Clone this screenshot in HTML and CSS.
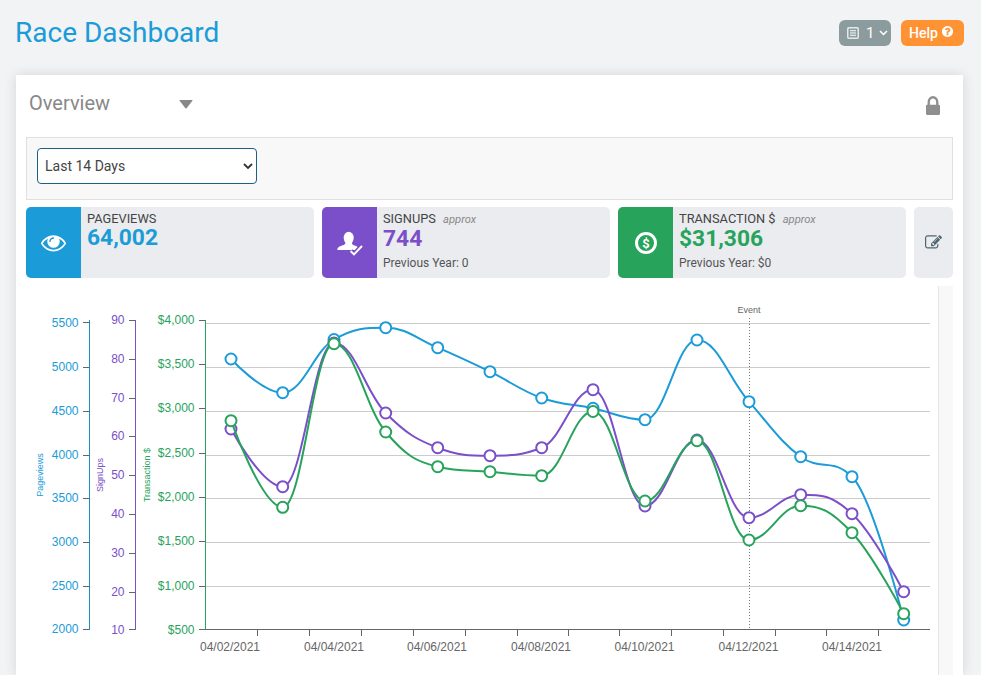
FILE: index.html
```html
<!DOCTYPE html>
<html lang="en">
<head>
<meta charset="utf-8">
<title>Race Dashboard</title>
<link rel="stylesheet" href="styles.css">
</head>
<body>
<header class="top">
  <h1 class="title">Race Dashboard</h1>
  <div class="top-actions">
    <button class="btn btn-gray" type="button">
      <svg class="doc-icon" viewBox="0 0 12 12"><rect x="0.75" y="0.75" width="10.5" height="10.5" rx="1" fill="none" stroke="currentColor" stroke-width="1.5"/><path d="M3 3.5h6M3 5.2h6M3 6.9h6M3 8.6h6" stroke="currentColor" stroke-width="1"/></svg>
      <span class="btn-num">1</span>
      <svg class="chev-icon" viewBox="0 0 9 6"><path d="M1 1l3.5 3.5L8 1" fill="none" stroke="currentColor" stroke-width="1.5"/></svg>
    </button>
    <button class="btn btn-orange" type="button">
      <span>Help</span>
      <svg class="help-icon" viewBox="0 0 1792 1792"><path fill="currentColor" d="M1024 1376v-192q0-14-9-23t-23-9h-192q-14 0-23 9t-9 23v192q0 14 9 23t23 9h192q14 0 23-9t9-23zm256-672q0-88-55.5-163t-138.5-116-170-41q-243 0-371 213-15 24 8 42l132 100q7 6 19 6 16 0 25-12 53-68 86-92 34-24 86-24 48 0 85.5 26t37.5 59q0 38-20 61t-68 45q-63 28-115.5 86.5t-52.5 125.5v36q0 14 9 23t23 9h192q14 0 23-9t9-23q0-19 21.5-49.5t54.5-49.5q32-18 49-28.5t46-35 44.5-48 28-60.5 12.5-81zm384 192q0 209-103 385.5t-279.5 279.5-385.5 103-385.5-103-279.5-279.5-103-385.5 103-385.5 279.5-279.5 385.5-103 385.5 103 279.5 279.5 103 385.5z"/></svg>
    </button>
  </div>
</header>

<main class="card">
  <div class="card-head">
    <div class="view-name">
      <span>Overview</span>
      <svg class="caret" viewBox="0 0 14 9"><path d="M1 0h12q1 0 .4.8L7.6 8.2q-.6.8-1.2 0L.6.8Q0 0 1 0z" fill="currentColor"/></svg>
    </div>
    <svg class="lock" viewBox="320 128 1152 1408" preserveAspectRatio="none"><path fill="currentColor" d="M640 768h512v-192q0-106-75-181t-181-75-181 75-75 181v192zm832 96v576q0 40-28 68t-68 28h-960q-40 0-68-28t-28-68v-576q0-40 28-68t68-28h32v-192q0-184 132-316t316-132 316 132 132 316v192h32q40 0 68 28t28 68z"/></svg>
  </div>

  <div class="filter-box">
    <div class="select-wrap">
      <select class="range-select">
        <option>Last 14 Days</option>
      </select>
      <svg class="select-chev" viewBox="0 0 10 7"><path d="M1 1l4 4 4-4" fill="none" stroke="currentColor" stroke-width="1.8"/></svg>
    </div>
  </div>

  <section class="stats">
    <article class="stat">
      <div class="stat-icon bg-blue">
        <svg class="eye" viewBox="0 0 1792 1792"><path fill="currentColor" d="M1664 960q-152-236-381-353 61 104 61 225 0 185-131.5 316.5t-316.5 131.5-316.5-131.5-131.5-316.5q0-121 61-225-229 117-381 353 133 205 333.5 326.5t434.5 121.5 434.5-121.5 333.5-326.5zm-720-384q0-20-14-34t-34-14q-125 0-214.5 89.5t-89.5 214.5q0 20 14 34t34 14 34-14 14-34q0-86 61-147t147-61q20 0 34-14t14-34zm848 384q0 34-20 69-140 230-376.5 368.5t-499.5 138.5-499.5-139-376.5-368q-20-35-20-69t20-69q140-229 376.5-368t499.5-139 499.5 139 376.5 368q20 35 20 69z"/></svg>
      </div>
      <div class="stat-body">
        <div class="stat-label">PAGEVIEWS</div>
        <div class="stat-value c-blue">64,002</div>
      </div>
    </article>
    <article class="stat">
      <div class="stat-icon bg-purple">
        <svg class="user-check" viewBox="0 0 28 28">
          <ellipse cx="12.7" cy="9" rx="5" ry="6.2" fill="#fff"/>
          <path d="M9.5 14c0 1.800-3 2.200-5.500 3.300-1.800.8-2.700 2-2.700 3.700h22c0-1.700-1-2.900-2.800-3.700-2.500-1.100-4.700-1.500-4.700-3.300z" fill="#fff"/>
          <path d="M14.500 22l3.500 3.500 8-8.500" fill="none" stroke="#7b4fc9" stroke-width="5"/>
          <path d="M14.500 22l3.500 3.500 8-8.500" fill="none" stroke="#fff" stroke-width="1.900"/>
        </svg>
      </div>
      <div class="stat-body">
        <div class="stat-label">SIGNUPS <em class="approx">approx</em></div>
        <div class="stat-value c-purple">744</div>
        <div class="stat-prev">Previous Year: 0</div>
      </div>
    </article>
    <article class="stat">
      <div class="stat-icon bg-green">
        <svg class="dollar" viewBox="0 0 22 22">
          <circle cx="11" cy="11" r="9.500" fill="none" stroke="#fff" stroke-width="3"/>
          <text class="dollar-text" x="11" y="15.500">$</text>
        </svg>
      </div>
      <div class="stat-body">
        <div class="stat-label">TRANSACTION $ <em class="approx">approx</em></div>
        <div class="stat-value c-green">$31,306</div>
        <div class="stat-prev">Previous Year: $0</div>
      </div>
    </article>
    <button class="edit-tile" type="button" aria-label="Edit">
      <svg class="edit-icon" viewBox="0 0 1792 1792"><path fill="currentColor" d="M888 1184l116-116-152-152-116 116v56h96v96h56zm440-720q-16-16-33 1l-350 350q-17 17-1 33t33-1l350-350q17-17 1-33zm80 594v190q0 119-84.500 203.500t-203.500 84.500h-832q-119 0-203.500-84.500t-84.500-203.500v-832q0-119 84.500-203.500t203.500-84.500h832q63 0 117 25 15 7 18 23 3 17-9 29l-49 49q-14 14-32 8-23-6-45-6h-832q-66 0-113 47t-47 113v832q0 66 47 113t113 47h832q66 0 113-47t47-113v-126q0-13 9-22l64-64q15-15 35-7t20 29zm-96-738l288 288-672 672h-288v-288zm444 132l-92 92-288-288 92-92q28-28 68-28t68 28l152 152q28 28 28 68t-28 68z"/></svg>
    </button>
  </section>

  <section class="chart-row">
    <svg id="chart" class="chart" viewBox="26 286 912 389"></svg>
    <div class="chart-side"></div>
  </section>
</main>
<script src="chart.js"></script>
</body>
</html>
```
FILE: styles.css
```css
* { box-sizing: border-box; }
html, body { height: 100%; }
body {
  margin: 0;
  height: 675px;
  overflow: hidden;
  background: #f1f3f5;
  font-family: Roboto, "Liberation Sans", sans-serif;
  color: #444;
}
.top {
  display: flex;
  justify-content: space-between;
  align-items: flex-start;
  padding: 20px 17px 0 15px;
  height: 75px;
}
.title {
  margin: -3px 0 0;
  font-size: 28px;
  line-height: 32px;
  font-weight: 400;
  color: #1b9bd7;
}
.top-actions { display: flex; gap: 10px; }
.btn {
  display: flex;
  align-items: center;
  height: 26px;
  padding: 0;
  border: 0;
  border-radius: 6px;
  color: #fff;
  font: 500 14px Roboto, sans-serif;
}
.btn-gray { width: 52px; background: #8c9c9e; padding-left: 8px; gap: 7px; }
.btn-gray .doc-icon { width: 12px; height: 12px; color: #e3e9e9; }
.btn-num { font-size: 15px; font-weight: 400; }
.chev-icon { width: 9px; height: 6px; margin-left: -2px; }
.btn-orange { width: 63px; background: #ff9233; padding-left: 8px; gap: 3px; }
.help-icon { width: 13px; height: 13px; margin-top: -3px; }

.card {
  margin: 0 18px 0 16px;
  height: 600px;
  padding: 0 10px;
  background: #fff;
  box-shadow: 0 0 12px rgba(0, 0, 0, .12);
}
.card-head {
  display: flex;
  justify-content: space-between;
  align-items: center;
  height: 62px;
  padding: 0 13px 7px 3px;
}
.view-name {
  display: flex;
  align-items: center;
  gap: 69px;
  font-size: 20px;
  color: #888;
}
.caret { width: 14px; height: 9px; color: #888; margin-top: 4px; }
.lock { width: 14px; height: 19px; color: #8f8f8f; margin-top: 5px; }

.filter-box {
  height: 63px;
  padding: 10px;
  background: #f8f8f8;
  border: 1px solid #e0e0e0;
}
.select-wrap { position: relative; width: 220px; }
.range-select {
  display: block;
  width: 100%;
  height: 36px;
  padding: 0 7px;
  appearance: none;
  background: #fff;
  border: 1px solid #1d5f82;
  border-radius: 4px;
  color: #444;
  font: 400 14px Roboto, sans-serif;
}
.select-chev {
  position: absolute;
  right: 4px;
  top: 15px;
  width: 10px;
  height: 7px;
  color: #333;
}

.stats {
  display: flex;
  gap: 8px;
  margin-top: 7px;
}
.stat {
  display: flex;
  flex: 0 0 288px;
  height: 71px;
  background: #eaecef;
  border-radius: 5px;
  overflow: hidden;
}
.stat-icon {
  flex: 0 0 55px;
  display: flex;
  align-items: center;
  justify-content: center;
  color: #fff;
}
.bg-blue { background: #1b9bd7; }
.bg-purple { background: #7b4fc9; }
.bg-green { background: #27a35c; }
.c-blue { color: #1b9bd7; }
.c-purple { color: #7b4fc9; }
.c-green { color: #27a35c; }
.eye { width: 25px; height: 25px; }
.user-check { width: 28px; height: 28px; }
.dollar { width: 22px; height: 22px; }
.dollar-text {
  fill: #fff;
  font: 700 13px Roboto, sans-serif;
  text-anchor: middle;
}
.stat-body { padding: 5px 6px; }
.stat-label { font-size: 12.800px; line-height: 14px; color: #444; white-space: nowrap; }
.approx { margin-left: 4px; font-size: 11.200px; color: #888; }
.stat-value { font-size: 22.800px; line-height: 24px; font-weight: 700; }
.stat-prev { margin-top: 5px; font-size: 12px; line-height: 14px; color: #555; }
.edit-tile {
  flex: 1;
  display: flex;
  align-items: center;
  justify-content: center;
  padding: 0;
  border: 0;
  border-radius: 5px;
  background: #eaecef;
  color: #4f6672;
}
.edit-icon { width: 17px; height: 17px; }

.chart-row { display: flex; margin-top: 8px; height: 389px; }
.chart { display: block; flex: 0 0 912px; width: 912px; height: 389px; }
.chart-side {
  flex: 1;
  background: #f8f8f8;
  border-left: 1px solid #e6e6e6;
}

.grid-line { stroke: #cccccc; stroke-width: 1; }
.axis-base { stroke: #666; stroke-width: 1; }
.tick { stroke: #666; stroke-width: 1; }
.axis-blue { stroke: #1b8fc9; stroke-width: 1; }
.axis-purple { stroke: #7b4fc9; stroke-width: 1; }
.axis-green { stroke: #27a35c; stroke-width: 1; }
.event-line { stroke: #777; stroke-width: 1; stroke-dasharray: 1 2; }
.label { font: 12px "Liberation Sans", Arial, sans-serif; }
.label-end { text-anchor: end; }
.label-mid { text-anchor: middle; }
.label-x { fill: #666; }
.fill-blue { fill: #1b9bd7; }
.fill-purple { fill: #7b4fc9; }
.fill-green { fill: #27a35c; }
.axis-title { font: 9px "Liberation Sans", Arial, sans-serif; text-anchor: middle; }
.event-label { font: 9px "Liberation Sans", Arial, sans-serif; text-anchor: middle; fill: #666; }
.series { fill: none; stroke-width: 2; }
.dot { fill: #fff; stroke-width: 2; }
.stroke-blue { stroke: #1b9bd7; }
.stroke-purple { stroke: #7b4fc9; }
.stroke-green { stroke: #27a35c; }
```
FILE: chart.js
```js
(function () {
  var svg = document.getElementById('chart');
  var NS = 'http://www.w3.org/2000/svg';

  function add(tag, attrs, text) {
    var el = document.createElementNS(NS, tag);
    for (var k in attrs) el.setAttribute(k, attrs[k]);
    if (text !== undefined) el.textContent = text;
    svg.appendChild(el);
    return el;
  }
  function line(x1, y1, x2, y2, cls) {
    add('line', { x1: x1, y1: y1, x2: x2, y2: y2, 'class': cls });
  }

  var gridY = [323.5, 367.5, 411.5, 455.5, 498.5, 542.5, 586.5];
  gridY.forEach(function (y) { line(206, y, 930, y, 'grid-line'); });

  var axes = [
    { x: 89.5, color: 'blue', ticks: [
      ['5500', 322.5, 327], ['5000', 367.5, 371], ['4500', 411.5, 415], ['4000', 455.5, 459],
      ['3500', 498.5, 502], ['3000', 542.5, 546], ['2500', 586.5, 590], ['2000', 629.5, 633]] },
    { x: 135.5, color: 'purple', ticks: [
      ['90', 320.5, 324], ['80', 359.5, 363], ['70', 398.5, 402], ['60', 436.5, 440],
      ['50', 475.5, 479], ['40', 514.5, 518], ['30', 553.5, 557], ['20', 592.5, 596], ['10', 629.5, 634]] },
    { x: 205.5, color: 'green', ticks: [
      ['$4,000', 320.5, 324], ['$3,500', 364.5, 368], ['$3,000', 408.5, 412], ['$2,500', 453.5, 457],
      ['$2,000', 497.5, 501], ['$1,500', 541.5, 545], ['$1,000', 586.5, 590], ['$500', 629.5, 634]] }
  ];
  axes.forEach(function (a) {
    line(a.x, 320, a.x, 630, 'axis-' + a.color);
    a.ticks.forEach(function (t) {
      line(a.x - 6.5, t[1], a.x, t[1], 'tick');
      add('text', { x: a.x - 11, y: t[2], 'class': 'label label-end fill-' + a.color }, t[0]);
    });
  });

  [['Pageviews', 42.5, 'blue'], ['SignUps', 102.5, 'purple'], ['Transaction $', 149.5, 'green']].forEach(function (t) {
    add('text', {
      x: t[1], y: 475, transform: 'rotate(-90 ' + t[1] + ' 475)',
      'class': 'axis-title fill-' + t[2]
    }, t[0]);
  });

  line(206, 629.5, 930, 629.5, 'axis-base');
  [257.5, 309.5, 361.5, 413.5, 465.5, 517.5, 568.5, 619.5, 671.5, 723.5, 775.5, 826.5, 878.5].forEach(function (x) {
    line(x, 630, x, 636, 'tick');
  });
  [['04/02/2021', 230], ['04/04/2021', 334], ['04/06/2021', 437], ['04/08/2021', 541],
   ['04/10/2021', 644.5], ['04/12/2021', 748.5], ['04/14/2021', 852]].forEach(function (t) {
    add('text', { x: t[1], y: 651, 'class': 'label label-mid label-x' }, t[0]);
  });

  line(749.5, 318, 749.5, 629, 'event-line');
  add('text', { x: 749, y: 313, 'class': 'event-label' }, 'Event');

  var xs = [231, 282.7, 334, 385.7, 437.7, 490, 541.7, 593, 645, 697, 749, 800.7, 852, 903.7];
  var series = [
    ['blue', [359, 392.7, 339.5, 327.7, 347.7, 371.7, 398, 408.3, 419.7, 340, 401.7, 456.7, 476.7, 620]],
    ['purple', [429, 486.7, 343, 413, 447.7, 455.7, 447.7, 389.7, 506, 440, 517.7, 494.7, 513.7, 591.7]],
    ['green', [420.7, 507.3, 343.7, 432, 466.7, 471.7, 475.7, 411.5, 501, 440.7, 540, 505.7, 532.7, 613.7]]
  ];

  // Spline with handles at 0.4 of the segment, flattened at local extremes.
  function splinePath(ys) {
    var n = xs.length, lx = [], ly = [], rx = [], ry = [];
    for (var i = 1; i < n - 1; i++) {
      var x = xs[i], y = ys[i], py = ys[i - 1], ny = ys[i + 1];
      var lcx = (1.5 * x + xs[i - 1]) / 2.5, lcy = (1.5 * y + py) / 2.5;
      var rcx = (1.5 * x + xs[i + 1]) / 2.5, rcy = (1.5 * y + ny) / 2.5;
      var c = (rcy - lcy) * (rcx - x) / (rcx - lcx) + y - rcy;
      lcy += c; rcy += c;
      if (lcy > py && lcy > y) { lcy = Math.max(py, y); rcy = 2 * y - lcy; }
      else if (lcy < py && lcy < y) { lcy = Math.min(py, y); rcy = 2 * y - lcy; }
      if (rcy > ny && rcy > y) { rcy = Math.max(ny, y); lcy = 2 * y - rcy; }
      else if (rcy < ny && rcy < y) { rcy = Math.min(ny, y); lcy = 2 * y - rcy; }
      lx[i] = lcx; ly[i] = lcy; rx[i] = rcx; ry[i] = rcy;
    }
    var d = 'M' + xs[0] + ' ' + ys[0];
    for (var j = 1; j < n; j++) {
      var c0x = j > 1 ? rx[j - 1] : xs[0], c0y = j > 1 ? ry[j - 1] : ys[0];
      var c1x = j < n - 1 ? lx[j] : xs[j], c1y = j < n - 1 ? ly[j] : ys[j];
      d += 'C' + c0x + ' ' + c0y + ' ' + c1x + ' ' + c1y + ' ' + xs[j] + ' ' + ys[j];
    }
    return d;
  }

  series.forEach(function (s) {
    add('path', { d: splinePath(s[1]), 'class': 'series stroke-' + s[0] });
    s[1].forEach(function (y, i) {
      add('circle', { cx: xs[i], cy: y, r: 5.5, 'class': 'dot stroke-' + s[0] });
    });
  });
})();
```
